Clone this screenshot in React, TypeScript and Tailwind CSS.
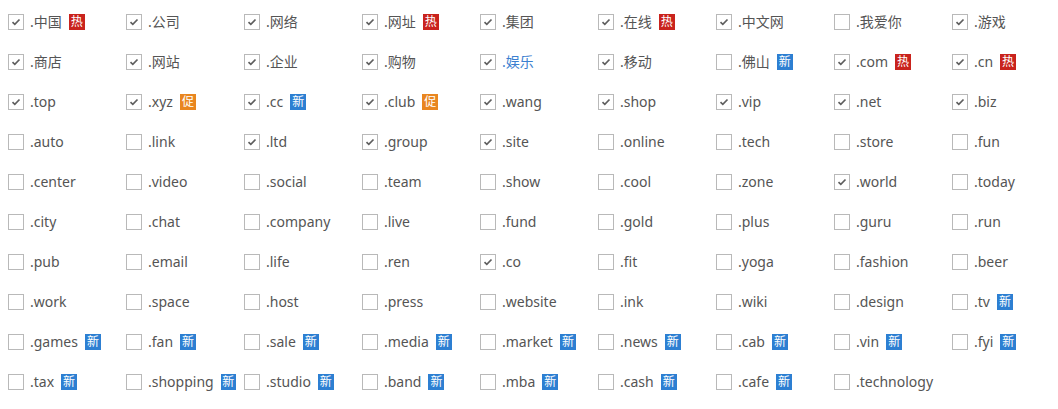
type Tag = "hot" | "new" | "promo";
type Item = { name: string; checked?: boolean; tag?: Tag; link?: boolean };

const items: Item[] = [
  { name: ".中国", checked: true, tag: "hot" },
  { name: ".公司", checked: true },
  { name: ".网络", checked: true },
  { name: ".网址", checked: true, tag: "hot" },
  { name: ".集团", checked: true },
  { name: ".在线", checked: true, tag: "hot" },
  { name: ".中文网", checked: true },
  { name: ".我爱你" },
  { name: ".游戏", checked: true },

  { name: ".商店", checked: true },
  { name: ".网站", checked: true },
  { name: ".企业", checked: true },
  { name: ".购物", checked: true },
  { name: ".娱乐", checked: true, link: true },
  { name: ".移动", checked: true },
  { name: ".佛山", tag: "new" },
  { name: ".com", checked: true, tag: "hot" },
  { name: ".cn", checked: true, tag: "hot" },

  { name: ".top", checked: true },
  { name: ".xyz", checked: true, tag: "promo" },
  { name: ".cc", checked: true, tag: "new" },
  { name: ".club", checked: true, tag: "promo" },
  { name: ".wang", checked: true },
  { name: ".shop", checked: true },
  { name: ".vip", checked: true },
  { name: ".net", checked: true },
  { name: ".biz", checked: true },

  { name: ".auto" },
  { name: ".link" },
  { name: ".ltd", checked: true },
  { name: ".group", checked: true },
  { name: ".site", checked: true },
  { name: ".online" },
  { name: ".tech" },
  { name: ".store" },
  { name: ".fun" },

  { name: ".center" },
  { name: ".video" },
  { name: ".social" },
  { name: ".team" },
  { name: ".show" },
  { name: ".cool" },
  { name: ".zone" },
  { name: ".world", checked: true },
  { name: ".today" },

  { name: ".city" },
  { name: ".chat" },
  { name: ".company" },
  { name: ".live" },
  { name: ".fund" },
  { name: ".gold" },
  { name: ".plus" },
  { name: ".guru" },
  { name: ".run" },

  { name: ".pub" },
  { name: ".email" },
  { name: ".life" },
  { name: ".ren" },
  { name: ".co", checked: true },
  { name: ".fit" },
  { name: ".yoga" },
  { name: ".fashion" },
  { name: ".beer" },

  { name: ".work" },
  { name: ".space" },
  { name: ".host" },
  { name: ".press" },
  { name: ".website" },
  { name: ".ink" },
  { name: ".wiki" },
  { name: ".design" },
  { name: ".tv", tag: "new" },

  { name: ".games", tag: "new" },
  { name: ".fan", tag: "new" },
  { name: ".sale", tag: "new" },
  { name: ".media", tag: "new" },
  { name: ".market", tag: "new" },
  { name: ".news", tag: "new" },
  { name: ".cab", tag: "new" },
  { name: ".vin", tag: "new" },
  { name: ".fyi", tag: "new" },

  { name: ".tax", tag: "new" },
  { name: ".shopping", tag: "new" },
  { name: ".studio", tag: "new" },
  { name: ".band", tag: "new" },
  { name: ".mba", tag: "new" },
  { name: ".cash", tag: "new" },
  { name: ".cafe", tag: "new" },
  { name: ".technology" },
];

function Badge({ tag }: { tag: Tag }) {
  if (tag === "hot")
    return (
      <span className="ml-[7px] flex h-4 w-4 items-center justify-center bg-[#c9231d] text-[12px] leading-none text-white">
        热
      </span>
    );
  if (tag === "promo")
    return (
      <span className="ml-[7px] flex h-4 w-4 items-center justify-center bg-[#e9861f] text-[12px] leading-none text-white">
        促
      </span>
    );
  return (
    <span className="ml-[7px] flex h-4 w-4 items-center justify-center bg-[#2d7fd2] text-[12px] leading-none text-white">
      新
    </span>
  );
}

function Checkbox({ checked }: { checked?: boolean }) {
  return (
    <span className="flex h-4 w-4 shrink-0 items-center justify-center border border-[#b9b9b9] bg-white">
      {checked && (
        <svg width="10" height="8" viewBox="0 0 10 8">
          <path d="M1.5 4.2 L3.8 6.3 L8.5 1.5" fill="none" stroke="#5e5e5e" strokeWidth="1.7" />
        </svg>
      )}
    </span>
  );
}

export default function App() {
  return (
    <div
      className="min-h-[409px] bg-white pt-[2px]"
      style={{ fontFamily: '"Noto Sans", "Noto Sans CJK SC", sans-serif' }}
    >
      <div className="grid grid-cols-[repeat(9,118px)]">
        {items.map((it) => (
          <label key={it.name} className="flex h-10 items-center pl-2">
            <Checkbox checked={it.checked} />
            <span
              className={
                "ml-[6px] whitespace-nowrap pb-px text-[14px] leading-5 " +
                (it.link ? "text-[#3b80d0]" : "text-[#555555]")
              }
            >
              {it.name}
            </span>
            {it.tag && <Badge tag={it.tag} />}
          </label>
        ))}
      </div>
    </div>
  );
}
